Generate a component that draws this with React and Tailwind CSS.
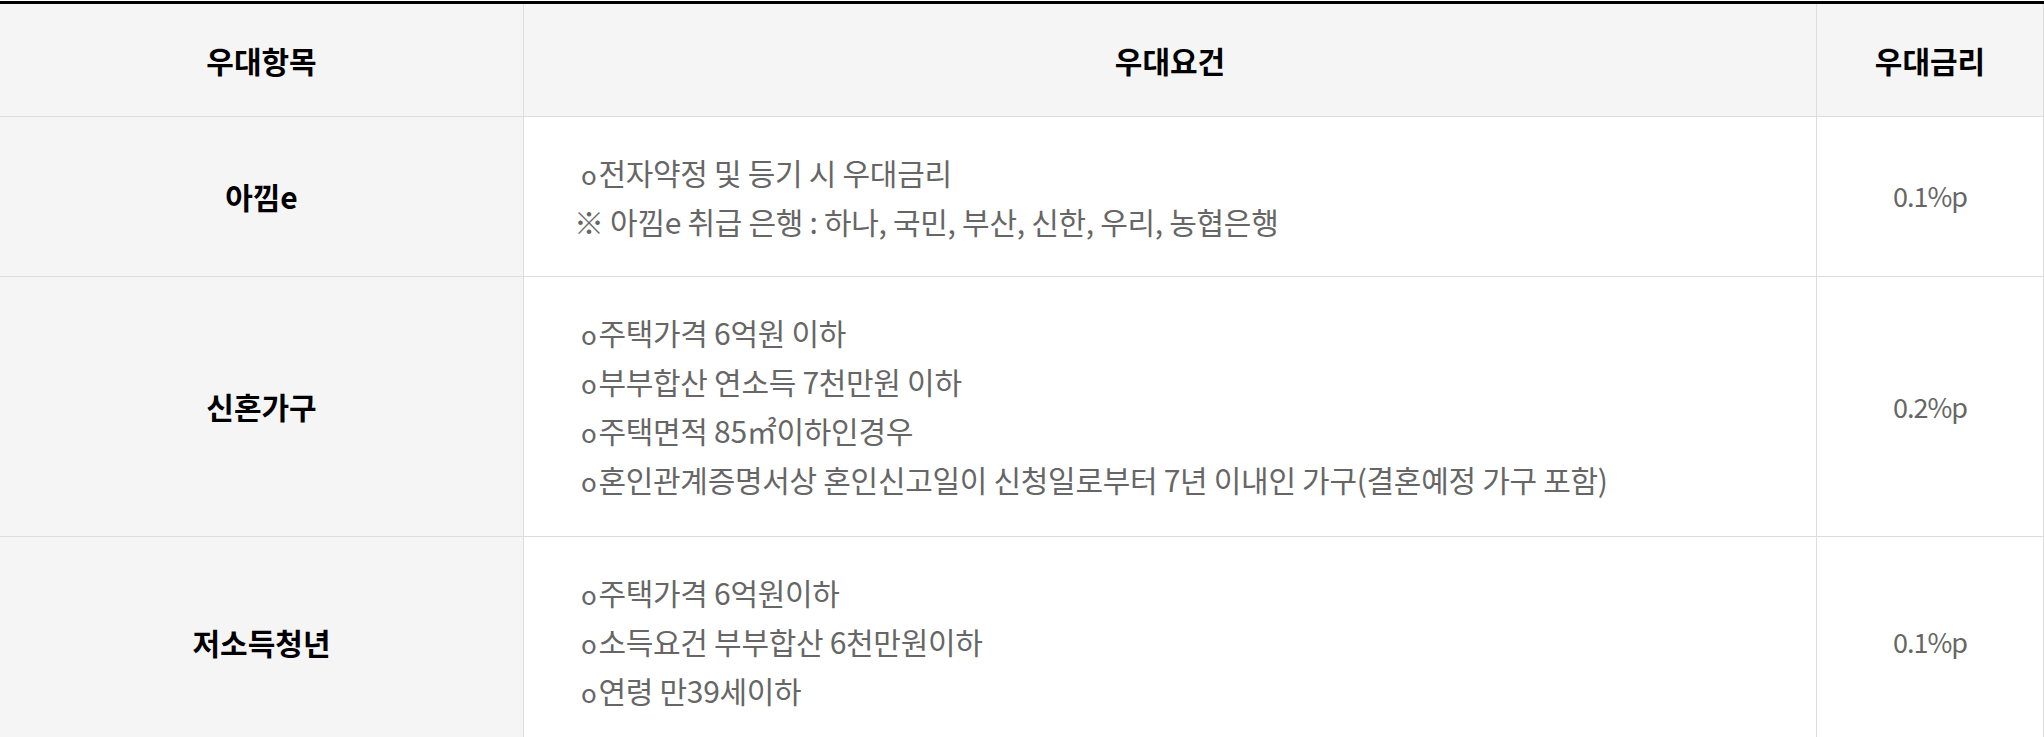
import React from 'react';

const rows = [
  {
    name: '아낌e',
    lines: [
      { bullet: true, text: '전자약정 및 등기 시 우대금리' },
      { bullet: false, text: '※ 아낌e 취급 은행 : 하나, 국민, 부산, 신한, 우리, 농협은행' },
    ],
    rate: '0.1%p',
  },
  {
    name: '신혼가구',
    lines: [
      { bullet: true, text: '주택가격 6억원 이하' },
      { bullet: true, text: '부부합산 연소득 7천만원 이하' },
      { bullet: true, text: '주택면적 85㎡이하인경우' },
      { bullet: true, text: '혼인관계증명서상 혼인신고일이 신청일로부터 7년 이내인 가구(결혼예정 가구 포함)' },
    ],
    rate: '0.2%p',
  },
  {
    name: '저소득청년',
    lines: [
      { bullet: true, text: '주택가격 6억원이하' },
      { bullet: true, text: '소득요건 부부합산 6천만원이하' },
      { bullet: true, text: '연령 만39세이하' },
    ],
    rate: '0.1%p',
  },
];

const font = { fontFamily: '"Noto Sans CJK KR", "Noto Sans", sans-serif' };

export default function App() {
  return (
    <div className="w-[2044px] bg-white pt-px" style={font}>
      <div className="border-t-[3px] border-black">
        {/* header */}
        <div className="grid grid-cols-[524px_1293px_227px] bg-[#f5f5f5] text-[30px] font-bold text-black">
          <div className="flex h-[113px] items-center justify-center border-b border-r border-[#dddddd]">우대항목</div>
          <div className="flex h-[113px] items-center justify-center border-b border-r border-[#dddddd]">우대요건</div>
          <div className="flex h-[113px] items-center justify-center border-b border-r border-[#dddddd]">우대금리</div>
        </div>

        {rows.map((row) => (
          <div key={row.name} className="grid grid-cols-[524px_1293px_227px]">
            <div className="flex items-center justify-center border-b border-r border-[#dddddd] bg-[#f5f5f5] text-[30px] font-bold text-black">
              {row.name}
            </div>
            <div className="border-b border-r border-[#dddddd] py-[32px] pl-[50px] text-[30px] leading-[46.7px] tracking-[-0.3px] text-[#666666]">
              {row.lines.map((l, i) => (
                <div key={i} className="whitespace-nowrap">
                  {l.bullet ? (
                    <span className="ml-[7px]">
                      <span className="mr-[2px] text-[26px]">o</span>
                      {l.text}
                    </span>
                  ) : (
                    l.text
                  )}
                </div>
              ))}
            </div>
            <div className="flex items-center justify-center border-b border-r border-[#dddddd] text-[27px] tracking-[-1px] text-[#666666]">
              {row.rate}
            </div>
          </div>
        ))}
      </div>
    </div>
  );
}
